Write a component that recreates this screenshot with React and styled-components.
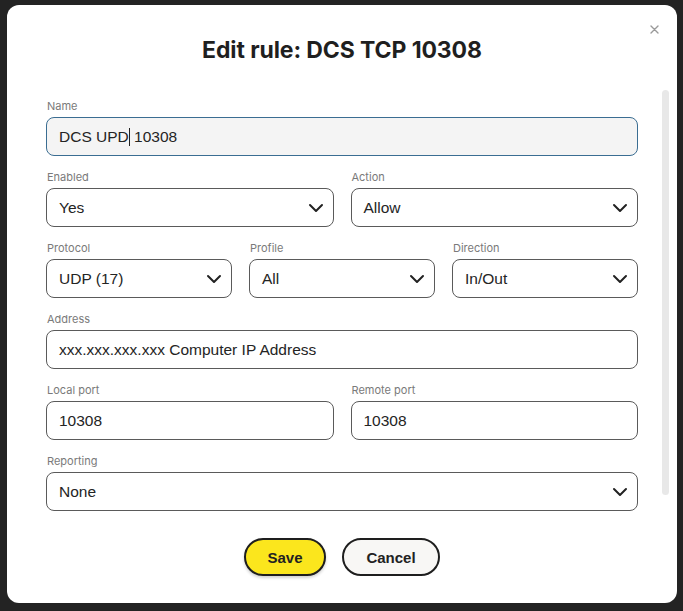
import React from "react";
import styled, { createGlobalStyle } from "styled-components";

const Global = createGlobalStyle`
	html, body {
		margin: 0;
		padding: 0;
		background: #232323;
		font-family: Inter, "Liberation Sans", sans-serif;
	}
	* {
		box-sizing: border-box;
	}
`;

const Page = styled.div`
	width: 683px;
	height: 611px;
	padding: 5px 6px 0 7px;
`;

const Modal = styled.div`
	position: relative;
	width: 670px;
	height: 598px;
	background: #ffffff;
	border-radius: 12px;
	display: flex;
	flex-direction: column;
	padding-right: 8px;
`;

const Close = styled.button`
	position: absolute;
	top: 14px;
	right: 13px;
	width: 20px;
	height: 20px;
	border: none;
	background: none;
	padding: 0;
	display: flex;
	align-items: center;
	justify-content: center;
	cursor: pointer;
`;

const Title = styled.h2`
	margin: 29px 0 0 8px;
	text-align: center;
	font-size: 23px;
	line-height: 32px;
	font-weight: 700;
	color: #1f1f1f;
	letter-spacing: -0.1px;
`;

const Body = styled.div`
	margin-top: 22px;
	height: 432px;
	display: flex;
`;

const ScrollArea = styled.div`
	flex: 1;
	overflow: hidden;
	padding: 11px 24px 0 39px;
`;

const Track = styled.div`
	width: 7px;
	padding-top: 2px;
`;

const Thumb = styled.div`
	height: 405px;
	background: #e8e8e8;
	border-radius: 4px;
`;

const Form = styled.div`
	display: flex;
	flex-direction: column;
	gap: 14px;
`;

const Row = styled.div`
	display: grid;
	grid-template-columns: repeat(${(p) => p.cols || 1}, 1fr);
	column-gap: 17px;
`;

const Group = styled.div`
	display: flex;
	flex-direction: column;
	gap: 4px;
`;

const Label = styled.label`
	font-size: 11px;
	line-height: 14px;
	color: #7a7a7a;
	padding-left: 1px;
`;

const Field = styled.div`
	height: 39px;
	border: 1px solid ${(p) => (p.focused ? "#3a6d92" : "#5a5a5a")};
	background: ${(p) => (p.focused ? "#f4f4f4" : "#ffffff")};
	border-radius: 8px;
	display: flex;
	align-items: center;
	justify-content: space-between;
	padding: 0 9px 0 12px;
	font-family: "Liberation Sans", Arial, sans-serif;
	font-size: 15.5px;
	color: #242424;
`;

const Caret = styled.span`
	display: inline-block;
	width: 1px;
	height: 18px;
	background: #222;
	vertical-align: -4px;
`;

const Footer = styled.div`
	display: flex;
	justify-content: center;
	gap: 16px;
	padding: 18px 0 0 8px;
`;

const Button = styled.button`
	height: 38px;
	width: ${(p) => p.w}px;
	border: 2px solid #1e1e1e;
	border-radius: 19px;
	background: ${(p) => (p.primary ? "#fbe61d" : "#f8f7f5")};
	font-family: "Liberation Sans", Arial, sans-serif;
	font-size: 15px;
	font-weight: 700;
	color: #222;
	box-shadow: ${(p) => (p.primary ? "0 2px 3px rgba(0,0,0,0.18)" : "none")};
	cursor: pointer;
`;

const Chevron = () => (
	<svg width="16" height="10" viewBox="0 0 16 10">
		<polyline points="2,2 8,8 14,2" fill="none" stroke="#222" strokeWidth="2" strokeLinecap="round" strokeLinejoin="round" />
	</svg>
);

const Select = ({ label, value }) => (
	<Group>
		<Label>{label}</Label>
		<Field>
			<span>{value}</span>
			<Chevron />
		</Field>
	</Group>
);

const Text = ({ label, children, focused }) => (
	<Group>
		<Label>{label}</Label>
		<Field focused={focused}>
			<span>{children}</span>
		</Field>
	</Group>
);

const App = () => {
	return (
		<>
			<Global />
			<Page>
				<Modal>
					<Close aria-label="Close">
						<svg width="9" height="9" viewBox="0 0 9 9">
							<path d="M1 1 L8 8 M8 1 L1 8" stroke="#9a9a9a" strokeWidth="1.4" strokeLinecap="round" />
						</svg>
					</Close>
					<Title>Edit rule: DCS TCP 10308</Title>
					<Body>
						<ScrollArea>
							<Form>
								<Text label="Name" focused>
									DCS UPD<Caret /> 10308
								</Text>
								<Row cols={2}>
									<Select label="Enabled" value="Yes" />
									<Select label="Action" value="Allow" />
								</Row>
								<Row cols={3}>
									<Select label="Protocol" value="UDP (17)" />
									<Select label="Profile" value="All" />
									<Select label="Direction" value="In/Out" />
								</Row>
								<Text label="Address">xxx.xxx.xxx.xxx Computer IP Address</Text>
								<Row cols={2}>
									<Text label="Local port">10308</Text>
									<Text label="Remote port">10308</Text>
								</Row>
								<Select label="Reporting" value="None" />
							</Form>
						</ScrollArea>
						<Track>
							<Thumb />
						</Track>
					</Body>
					<Footer>
						<Button primary w={82}>Save</Button>
						<Button w={98}>Cancel</Button>
					</Footer>
				</Modal>
			</Page>
		</>
	);
};

export default App;
